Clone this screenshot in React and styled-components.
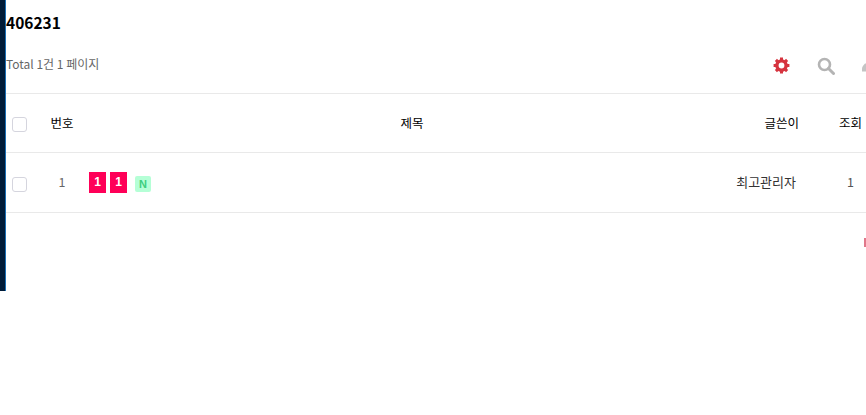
import React from "react";
import styled, { createGlobalStyle } from "styled-components";

const Global = createGlobalStyle`
  html, body { margin: 0; padding: 0; background: #fff; }
  body { font-family: "Noto Sans CJK KR", "Noto Sans", sans-serif; }
`;

const Page = styled.div`
  width: 866px;
  height: 415px;
  overflow: hidden;
  display: flex;
  align-items: flex-start;
`;

const Sidebar = styled.aside`
  flex: 0 0 6px;
  box-sizing: border-box;
  height: 291px;
  background: #001b38;
  border-right: 1px solid #1a6fb5;
`;

const Main = styled.main`
  flex: 0 0 900px;
  display: flex;
  flex-direction: column;
`;

const Title = styled.h1`
  margin: 0;
  height: 47px;
  font-size: 15.5px;
  font-weight: 700;
  line-height: 45px;
  color: #000;
`;

const Toolbar = styled.div`
  height: 46px;
  display: flex;
  justify-content: space-between;
  align-items: flex-start;
`;

const Total = styled.span`
  font-size: 12px;
  line-height: 18px;
  margin-top: 8px;
  color: #666;
`;

const Tools = styled.div`
  display: flex;
  gap: 27px;
  padding: 10px 0 0 0;
  margin-right: 26px;
`;

const Row = styled.div`
  display: grid;
  grid-template-columns: 34px 44px 656px 59px 63px 44px;
  align-items: center;
  height: ${p => p.$h}px;
  box-sizing: border-box;
  border-top: 1px solid ${p => (p.$top ? "#e9e9e9" : "transparent")};
  border-bottom: 1px solid #e9e9e9;
  margin-top: ${p => (p.$top ? 0 : -1)}px;
  font-size: 12.5px;
`;

const Cell = styled.div`
  text-align: center;
  color: ${p => p.$color || "#000"};
  margin-top: ${p => (p.$lift ? -3 : -1)}px;
`;

const Writer = styled.div`
  text-align: right;
  white-space: nowrap;
  font-size: ${p => p.$size || 12.5}px;
  color: ${p => p.$color || "#000"};
  margin-left: -10px;
  padding-right: ${p => p.$pad || 0}px;
  margin-top: ${p => (p.$lift ? -3 : -1)}px;
`;

const Hits = styled.div`
  padding-left: 40px;
  text-align: center;
  color: ${p => p.$color || "#000"};
  margin-top: ${p => (p.$lift ? -3 : -1)}px;
`;

const Check = styled.span`
  display: block;
  box-sizing: border-box;
  width: 15px;
  height: 15px;
  margin: 3px 0 0 6px;
  border: 1px solid #d5d5de;
  border-radius: 3px;
  background: #fff;
`;

const Subject = styled.div`
  display: flex;
  align-items: center;
  padding-left: 5px;
`;

const Badge = styled.span`
  width: 17px;
  height: 21px;
  margin-right: 4px;
  background: #ff0058;
  color: #fff;
  font: 700 12px/21px "Liberation Sans", sans-serif;
  text-align: center;
`;

const New = styled.span`
  width: 16px;
  height: 16px;
  margin-left: 4px;
  margin-top: 3px;
  border-radius: 2px;
  background: #b5ffd6;
  color: #3fce7f;
  font: 700 11px/17px "Liberation Sans", sans-serif;
  text-align: center;
`;

const Footer = styled.div`
  display: flex;
  justify-content: flex-end;
  padding: 22px 28px 0 0;
`;

const Gear = () => (
  <svg width="17" height="17" viewBox="0 0 17 17" fill="none" stroke="#d6343f">
    <circle cx="8.5" cy="8.5" r="4.6" strokeWidth="3.4" />
    {[0, 45, 90, 135].map(a => (
      <path key={a} d="M8.5 0.6V16.4" strokeWidth="3" transform={`rotate(${a} 8.5 8.5)`} strokeDasharray="3.4 9 3.4" />
    ))}
  </svg>
);

const Search = () => (
  <svg width="18" height="18" viewBox="0 0 18 18" fill="none" stroke="#b4b4b4">
    <circle cx="7.5" cy="7.5" r="5.5" strokeWidth="2.6" />
    <path d="M11.5 11.5L16.5 16.5" strokeWidth="3" strokeLinecap="round" />
  </svg>
);

const Cloud = () => (
  <svg width="18" height="18" viewBox="0 0 18 18" fill="#c4c4c4">
    <path d="M0 14.5v-2.5c0-2 1-3.5 3-5.5h4v8z" />
  </svg>
);

const Heart = () => (
  <svg width="14" height="14" viewBox="0 0 14 14" fill="#e0788a">
    <path d="M0 3h14v9H0z" />
  </svg>
);

export default function App() {
  return (
    <Page>
      <Global />
      <Sidebar />
      <Main>
        <Title>406231</Title>
        <Toolbar>
          <Total>Total 1건 1 페이지</Total>
          <Tools>
            <Gear />
            <Search />
            <Cloud />
          </Tools>
        </Toolbar>
        <Row $top $h={60}>
          <div><Check /></div>
          <Cell>번호</Cell>
          <Cell>제목</Cell>
          <Writer>글쓴이</Writer>
          <Hits>조회</Hits>
          <div />
        </Row>
        <Row $h={61}>
          <div><Check /></div>
          <Cell $lift $color="#666">1</Cell>
          <Subject>
            <Badge>1</Badge>
            <Badge>1</Badge>
            <New>N</New>
          </Subject>
          <Writer $lift $size={13} $pad={3} $color="#333">최고관리자</Writer>
          <Hits $lift $color="#555">1</Hits>
          <div />
        </Row>
        <Footer><Heart /></Footer>
      </Main>
    </Page>
  );
}
